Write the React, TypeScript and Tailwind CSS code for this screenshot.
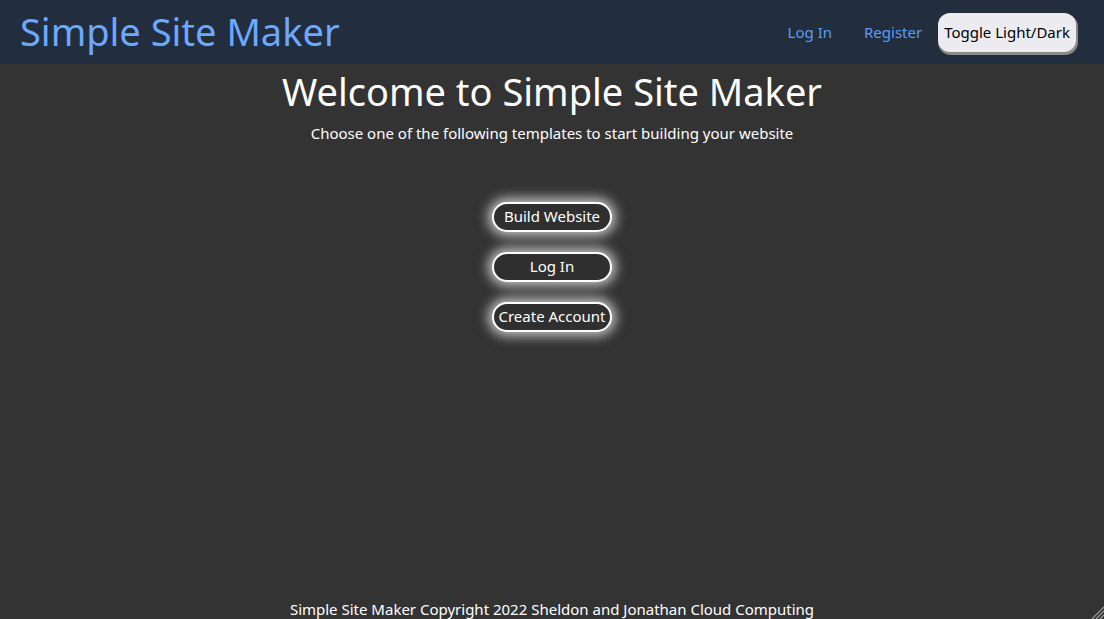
import React from 'react';

const font = { fontFamily: '"Noto Sans", "Open Sans", sans-serif' };

const GlowButton: React.FC<{ label: string }> = ({ label }) => (
  <button className="w-[120px] h-[30px] rounded-full border-2 border-white bg-[#2f2f2f] text-white text-[15px] leading-none shadow-[0_0_12px_4px_rgba(255,255,255,0.7)] whitespace-nowrap">
    {label}
  </button>
);

export default function App() {
  return (
    <div className="h-screen flex flex-col bg-[#333333] overflow-hidden relative" style={font}>
      {/* Header */}
      <header className="h-16 shrink-0 bg-[#222d3e] flex items-center justify-between pl-5 pr-7">
        <h1 className="text-[38px] text-[#6ea8fe] leading-none pb-[2px]">Simple Site Maker</h1>
        <nav className="flex items-center">
          <a className="text-[#5d9cf2] text-[15px] mr-8">Log In</a>
          <a className="text-[#5d9cf2] text-[15px] mr-4">Register</a>
          <button className="h-[39px] px-[6px] mt-[1px] rounded-[12px] bg-[#ececf0] text-black text-[15px] shadow-[1px_2px_0_1px_#8a8a8a]">
            Toggle Light/Dark
          </button>
        </nav>
      </header>

      {/* Main */}
      <main className="flex-1 flex flex-col items-center text-white">
        <h2 className="text-[38px] leading-none mt-[8px]">Welcome to Simple Site Maker</h2>
        <p className="text-[15px] mt-[12px]">Choose one of the following templates to start building your website</p>
        <div className="flex flex-col items-center gap-5 mt-[57px]">
          <GlowButton label="Build Website" />
          <GlowButton label="Log In" />
          <GlowButton label="Create Account" />
        </div>
      </main>

      {/* Footer */}
      <footer className="h-[20px] shrink-0 flex items-start justify-center text-white text-[15px] leading-5">
        Simple Site Maker Copyright 2022 Sheldon and Jonathan Cloud Computing
      </footer>

      {/* Resize grip */}
      <svg className="absolute right-0 bottom-0" width="14" height="14" viewBox="0 0 14 14">
        <line x1="14" y1="2" x2="2" y2="14" stroke="#9a9a9a" strokeWidth="1.2" />
        <line x1="14" y1="6" x2="6" y2="14" stroke="#9a9a9a" strokeWidth="1.2" />
        <line x1="14" y1="10" x2="10" y2="14" stroke="#9a9a9a" strokeWidth="1.2" />
      </svg>
    </div>
  );
}
